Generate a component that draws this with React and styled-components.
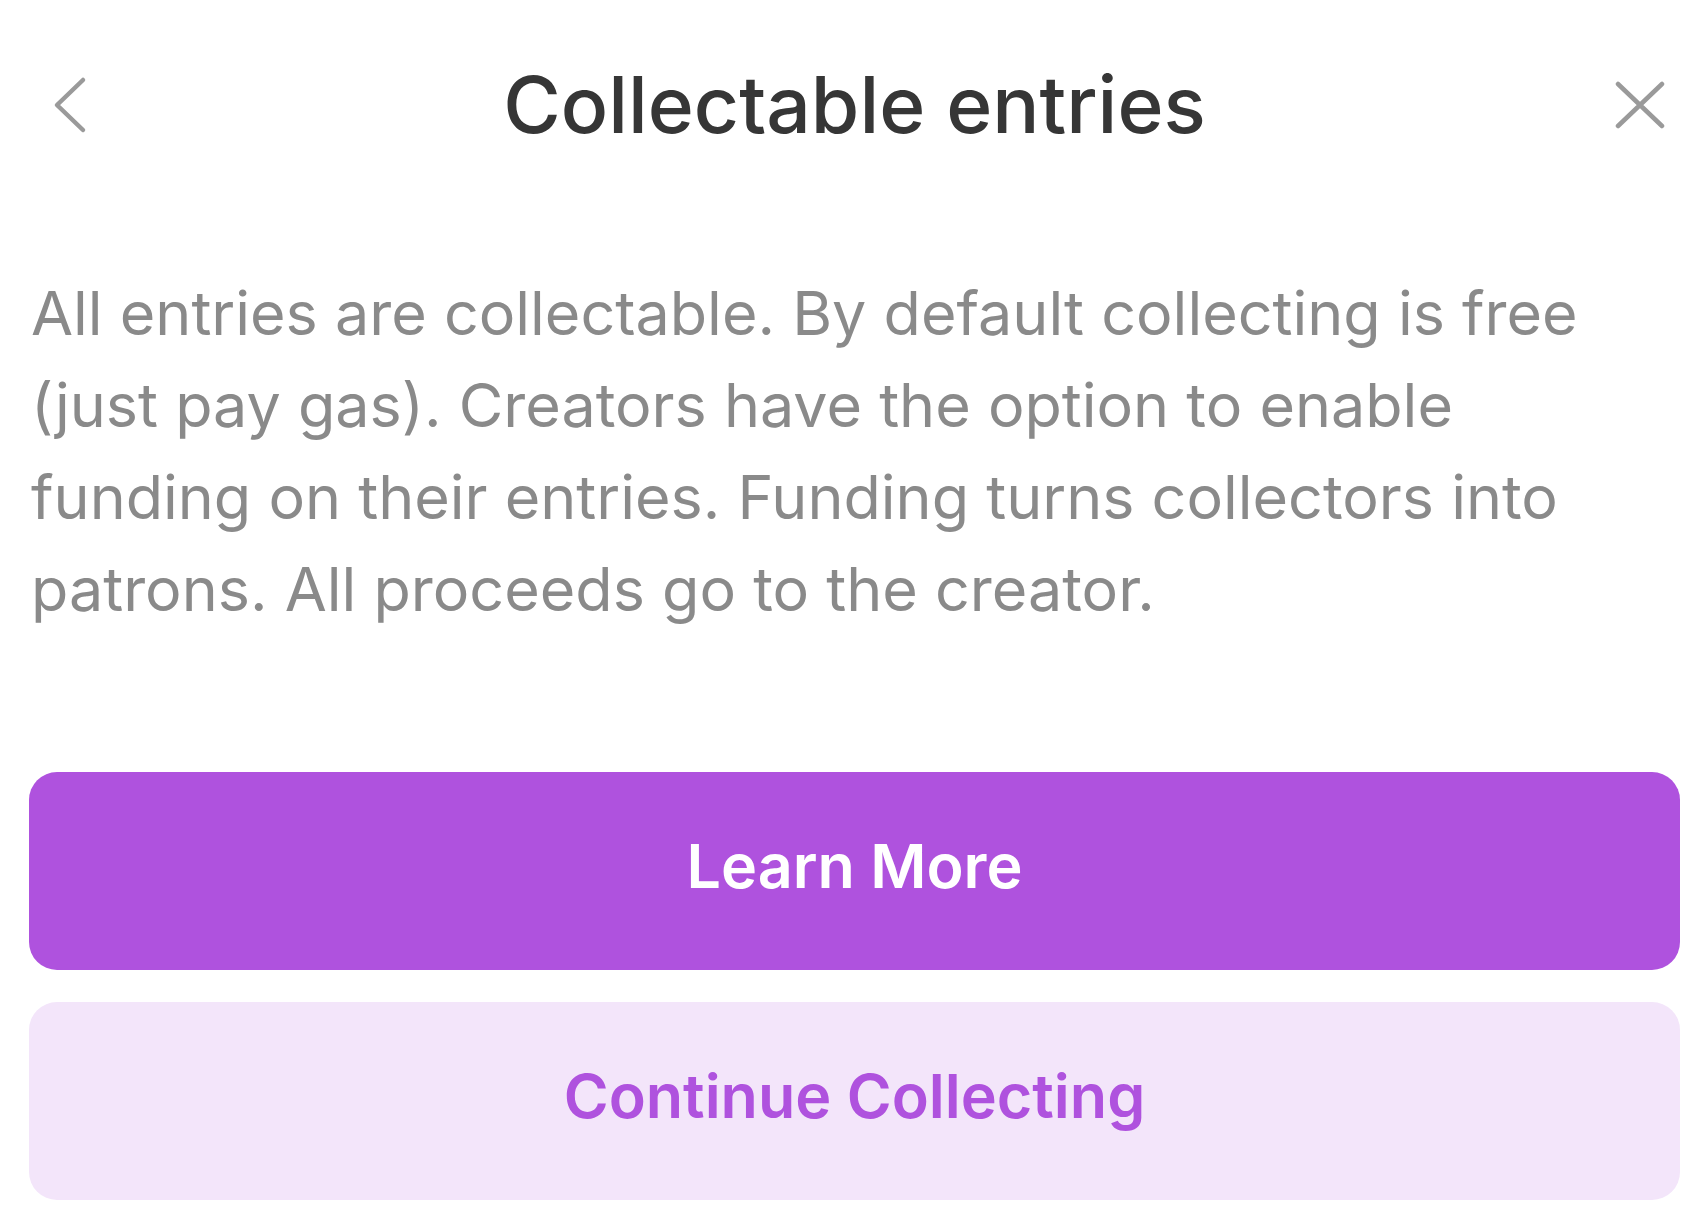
import React from "react";
import styled, { createGlobalStyle } from "styled-components";

const Global = createGlobalStyle`
  html, body {
    margin: 0;
    padding: 0;
    background: #ffffff;
  }
  body {
    font-family: Inter, "Noto Sans", "Liberation Sans", sans-serif;
    -webkit-font-smoothing: antialiased;
  }
  * { box-sizing: border-box; }
`;

const Sheet = styled.div`
  width: 1700px;
  padding: 40px 20px 0 29px;
  display: flex;
  flex-direction: column;
`;

const Header = styled.header`
  height: 130px;
  display: grid;
  grid-template-columns: 1fr auto 1fr;
  align-items: center;
`;

const IconButton = styled.button`
  border: none;
  background: none;
  padding: 0;
  margin: ${(p) => (p.$side === "left" ? "0 0 0 23px" : "0 15px 0 0")};
  justify-self: ${(p) => (p.$side === "left" ? "start" : "end")};
  display: flex;
  align-items: center;
  justify-content: center;
  color: #9a9a9a;
  cursor: pointer;
`;

const Title = styled.h1`
  margin: 0;
  font-size: 78.5px;
  font-weight: 500;
  color: #363636;
  letter-spacing: 0;
  line-height: 1.2;
  white-space: nowrap;
`;

const Body = styled.p`
  margin: 97px 0 0 0;
  padding-left: 2px;
  font-size: 61px;
  line-height: 92px;
  font-weight: 400;
  color: #8a8a8a;
`;

const Actions = styled.div`
  margin-top: 137px;
  display: flex;
  flex-direction: column;
  gap: 32px;
`;

const ActionButton = styled.button`
  height: 198px;
  width: 100%;
  border: none;
  border-radius: 28px;
  padding: 0 0 10px 0;
  font-family: inherit;
  font-size: 61px;
  font-weight: 600;
  cursor: pointer;
  background: ${(p) => (p.$primary ? "#af52de" : "#f3e5fa")};
  color: ${(p) => (p.$primary ? "#ffffff" : "#af52de")};
`;

const Chevron = () => (
  <svg width="36" height="58" viewBox="0 0 36 58" fill="none">
    <polyline
      points="31,4 5,29 31,54"
      stroke="currentColor"
      strokeWidth="4.5"
      strokeLinecap="round"
      strokeLinejoin="round"
    />
  </svg>
);

const Cross = () => (
  <svg width="50" height="48" viewBox="0 0 50 48" fill="none">
    <path
      d="M3 3 L47 45 M47 3 L3 45"
      stroke="currentColor"
      strokeWidth="4.5"
      strokeLinecap="round"
    />
  </svg>
);

export default function App() {
  return (
    <>
      <Global />
      <Sheet>
        <Header>
          <IconButton $side="left" aria-label="Back">
            <Chevron />
          </IconButton>
          <Title>Collectable entries</Title>
          <IconButton $side="right" aria-label="Close">
            <Cross />
          </IconButton>
        </Header>
        <Body>
          All entries are collectable. By default collecting is free (just pay
          gas). Creators have the option to enable funding on their entries.
          Funding turns collectors into patrons. All proceeds go to the creator.
        </Body>
        <Actions>
          <ActionButton $primary>Learn More</ActionButton>
          <ActionButton>Continue Collecting</ActionButton>
        </Actions>
      </Sheet>
    </>
  );
}
